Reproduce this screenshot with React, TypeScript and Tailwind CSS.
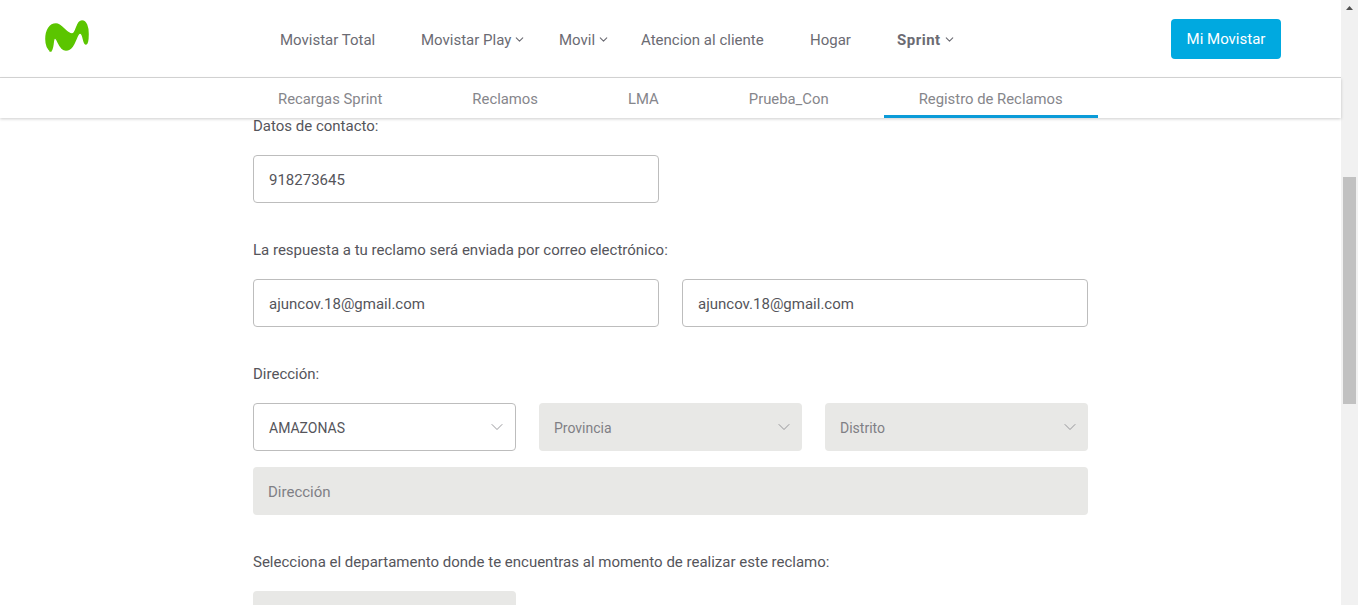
import { ChevronDown } from 'lucide-react'

const font = "font-['Roboto',sans-serif]"

function NavItem({ label, bold, menu, className }: { label: string; bold?: boolean; menu?: boolean; className: string }) {
  return (
    <span className={`flex items-center text-[15px] text-[#6b6b73] ${bold ? 'font-bold tracking-[0.5px]' : ''} ${className}`}>
      {label}
      {menu && <ChevronDown className="size-[13px] ml-[2px] mb-[2px]" strokeWidth={2} />}
    </span>
  )
}

function Tab({ label, active }: { label: string; active?: boolean }) {
  return (
    <span className={`h-10 pt-[6px] px-[35px] flex items-center text-[14.85px] text-[#86868b] border-b-[3px] ${active ? 'border-[#0b9bd8]' : 'border-transparent'}`}>
      {label}
    </span>
  )
}

function Select({ label, disabled }: { label: string; disabled?: boolean }) {
  return (
    <div className={`w-[263px] h-12 shrink-0 rounded-[4px] pl-[15px] pr-[8px] pt-[2px] flex items-center justify-between text-[14px] ${disabled ? 'bg-[#e8e8e6] text-[#7f7f85]' : 'bg-white border border-[#bdbdbd] text-[#55555b]'}`}>
      {label}
      <ChevronDown className="size-[20px] text-[#85858a] mb-[2px]" strokeWidth={1} />
    </div>
  )
}

function Input({ value }: { value: string }) {
  return (
    <div className="w-[406px] h-12 rounded-[4px] border border-[#bdbdbd] bg-white pl-[15px] pt-[2px] flex items-center text-[15px] text-[#55555b]">
      {value}
    </div>
  )
}

export default function App() {
  return (
    <div className={`${font} h-[605px] flex overflow-hidden bg-white`}>
      <div className="flex-1 min-w-0">
        <header className="h-[78px] border-b border-[#d8d8d8] flex items-center">
          <svg className="w-[44px] h-[32px] ml-[45px] mb-[5px] shrink-0" viewBox="0 0 44 32">
            <path
              d="M6 31C3 29 1 25 1 19 1 10 5 4 11 4c6 0 10 10 16 10 5 0 4-13 10-13 4 0 6 6 6 13 0 5-1 10-2 10-3 0-2-11-6-11-4 0-5 17-14 17-7 0-8-12-11-12-3 0-1 13-5 13z"
              fill="#5bc500"
              stroke="#5bc500"
              strokeWidth="1.6"
              strokeLinejoin="round"
            />
          </svg>
          <nav className="flex items-center ml-[191px] mt-1">
            <NavItem label="Movistar Total" className="w-[141px]" />
            <NavItem label="Movistar Play" menu className="w-[138px]" />
            <NavItem label="Movil" menu className="w-[82px]" />
            <NavItem label="Atencion al cliente" className="w-[169px]" />
            <NavItem label="Hogar" className="w-[87px]" />
            <NavItem label="Sprint" bold menu className="w-[274px]" />
          </nav>
          <button className="w-[110px] h-10 shrink-0 rounded-[4px] bg-[#00a9e0] pt-[2px] text-white text-[15px]">
            Mi Movistar
          </button>
        </header>
        <div className="h-10 pl-[243px] flex gap-5 bg-white shadow-[0_1px_3px_rgba(0,0,0,0.2)] relative">
          <Tab label="Recargas Sprint" />
          <Tab label="Reclamos" />
          <Tab label="LMA" />
          <Tab label="Prueba_Con" />
          <Tab label="Registro de Reclamos" active />
        </div>
        <main className="ml-[253px] w-[835px] text-[15px] text-[#55555b]">
          <p className="mt-[-2px] leading-5">Datos de contacto:</p>
          <div className="mt-[19px]">
            <Input value="918273645" />
          </div>
          <p className="mt-[37px] leading-5">La respuesta a tu reclamo será enviada por correo electrónico:</p>
          <div className="mt-[19px] flex gap-[23px]">
            <Input value="ajuncov.18@gmail.com" />
            <Input value="ajuncov.18@gmail.com" />
          </div>
          <p className="mt-[37px] leading-5">Dirección:</p>
          <div className="mt-[19px] flex gap-[23px]">
            <Select label="AMAZONAS" />
            <Select label="Provincia" disabled />
            <Select label="Distrito" disabled />
          </div>
          <div className="mt-4 h-12 rounded-[4px] bg-[#e8e8e6] pl-[15px] pt-[2px] flex items-center text-[15px] text-[#7f7f85]">
            Dirección
          </div>
          <p className="mt-[37px] leading-5">Selecciona el departamento donde te encuentras al momento de realizar este reclamo:</p>
          <div className="mt-[19px] w-[263px] h-12 rounded-[4px] bg-[#e8e8e6]" />
        </main>
      </div>
      <aside className="w-[17px] shrink-0 bg-[#f1f1f1] flex flex-col items-center">
        <svg className="w-[17px] h-[17px] shrink-0" viewBox="0 0 17 17">
          <path d="M8.5 6 12 10H5z" fill="#505050" />
        </svg>
        <div className="mt-[160px] w-[13px] h-[227px] bg-[#c1c1c1]" />
      </aside>
    </div>
  )
}
